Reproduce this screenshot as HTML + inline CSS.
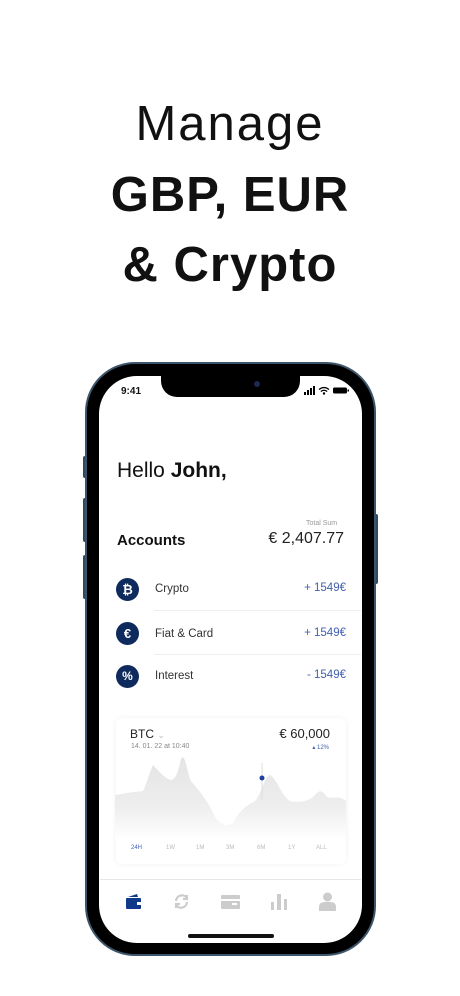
<!DOCTYPE html>
<html><head><meta charset="utf-8"><style>
*{margin:0;padding:0;box-sizing:border-box}
body{width:460px;height:996px;background:#fff;font-family:"Liberation Sans",sans-serif;position:relative;overflow:hidden;color:#111}
.h{position:absolute;left:0;width:460px;text-align:center;font-size:49px;color:#111;letter-spacing:1px}
.abs{position:absolute}
.ic{position:absolute;left:116px;width:23px;height:23px;border-radius:50%;background:#0f2a5c;color:#fff;font-size:13px;font-weight:bold;text-align:center;line-height:23px}
.lbl{position:absolute;left:155px;font-size:11.5px;color:#333}
.amt{position:absolute;right:114px;font-size:11.5px;color:#4060b0}
.tf{position:absolute;top:845px;font-size:6px;color:#bbb}
</style></head><body>
<div class="h" style="top:96px;font-weight:300;letter-spacing:2px">Manage</div>
<div class="h" style="top:167px;font-weight:bold">GBP, EUR</div>
<div class="h" style="top:237px;font-weight:bold">&amp; Crypto</div>

<div class="abs" style="left:83px;top:456px;width:4px;height:22px;background:#2d4a60;border-radius:2px"></div>
<div class="abs" style="left:83px;top:498px;width:4px;height:44px;background:#2d4a60;border-radius:2px"></div>
<div class="abs" style="left:83px;top:555px;width:4px;height:44px;background:#2d4a60;border-radius:2px"></div>
<div class="abs" style="left:374px;top:514px;width:4px;height:70px;background:#2d4a60;border-radius:2px"></div>
<div class="abs" style="left:85px;top:362px;width:291px;height:594px;border-radius:50px;background:#000;border:2px solid #3d566b"></div>
<div class="abs" style="left:99px;top:376px;width:263px;height:567px;border-radius:38px;background:#fff;overflow:hidden">
  <div class="abs" style="left:62px;top:-2px;width:139px;height:23px;background:#000;border-radius:0 0 16px 16px"></div>
  <div class="abs" style="left:155px;top:5px;width:6px;height:6px;border-radius:50%;background:#1a2a50"></div>
  <div class="abs" style="left:22px;top:10px;font-size:10px;font-weight:bold">9:41</div>
  <svg class="abs" style="left:205px;top:10px" width="46" height="9" viewBox="0 0 46 9">
    <rect x="0" y="6" width="2" height="3" fill="#000"/><rect x="3" y="4" width="2" height="5" fill="#000"/><rect x="6" y="2" width="2" height="7" fill="#000"/><rect x="9" y="0" width="2" height="9" fill="#000"/>
    <path d="M15 3.5 Q20 -0.5 25 3.5 M16.8 5.5 Q20 3 23.2 5.5" stroke="#000" stroke-width="1.3" fill="none"/><circle cx="20" cy="7.5" r="1.2" fill="#000"/>
    <rect x="29" y="1.5" width="14" height="6" rx="1.5" fill="#000"/><rect x="43.5" y="3.5" width="1.5" height="2" fill="#000"/>
  </svg>
</div>
<div class="abs" style="left:117px;top:459px;font-size:21px;color:#111">Hello <b>John,</b></div>
<div class="abs" style="left:306px;top:520px;font-size:7px;color:#999">Total Sum</div>
<div class="abs" style="left:117px;top:532px;font-size:15px;font-weight:bold">Accounts</div>
<div class="abs" style="right:116px;top:530px;font-size:16px;color:#222">€ 2,407.77</div>

<div class="ic" style="top:578px">₿</div>
<div class="lbl" style="top:583px">Crypto</div><div class="amt" style="top:582px">+ 1549€</div>
<div class="abs" style="left:154px;top:610px;width:207px;height:1px;background:#eee"></div>
<div class="ic" style="top:622px">€</div>
<div class="lbl" style="top:628px">Fiat &amp; Card</div><div class="amt" style="top:627px">+ 1549€</div>
<div class="abs" style="left:154px;top:654px;width:207px;height:1px;background:#eee"></div>
<div class="ic" style="top:665px;font-size:12px">%</div>
<div class="lbl" style="top:670px">Interest</div><div class="amt" style="top:669px">- 1549€</div>

<div class="abs" style="left:116px;top:718px;width:230px;height:146px;border-radius:6px;box-shadow:0 0 6px rgba(0,0,0,0.06)"></div>
<div class="abs" style="left:130px;top:727px;font-size:12px;color:#222">BTC <span style="color:#bbb;font-size:9px">⌄</span></div>
<div class="abs" style="left:131px;top:743px;font-size:7px;color:#888">14. 01. 22 at 10:40</div>
<div class="abs" style="right:130px;top:726px;font-size:13px;color:#222">€ 60,000</div>
<div class="abs" style="right:131px;top:744px;font-size:6px;color:#4060b0">▴ 12%</div>
<svg class="abs" style="left:115px;top:755px" width="231" height="85" viewBox="0 0 231 85">
  <defs><linearGradient id="g" x1="0" y1="0" x2="0" y2="1"><stop offset="0" stop-color="#e4e4e4"/><stop offset="0.6" stop-color="#eeeeee"/><stop offset="1" stop-color="#fff"/></linearGradient></defs>
  <path d="M0 40 C10 38 20 37 28 36 C32 28 35 16 38 10 C44 16 50 24 56 25 C62 24 64 12 66 4 C70 -4 72 18 76 26 C84 36 92 44 100 62 C106 70 112 72 118 68 C124 56 132 50 140 46 C146 40 150 20 155 20 C162 24 166 40 175 46 C185 48 195 46 200 40 C204 34 208 36 212 42 C218 44 224 40 231 46 L231 85 L0 85Z" fill="url(#g)"/>
  <line x1="147" y1="8" x2="147" y2="45" stroke="#ddd" stroke-width="1"/>
  <circle cx="147" cy="23" r="2.5" fill="#2040a0"/>
</svg>
<div class="tf" style="left:131px;color:#4060b0">24H</div>
<div class="tf" style="left:166px">1W</div>
<div class="tf" style="left:196px">1M</div>
<div class="tf" style="left:226px">3M</div>
<div class="tf" style="left:257px">6M</div>
<div class="tf" style="left:288px">1Y</div>
<div class="tf" style="left:316px">ALL</div>

<div class="abs" style="left:100px;top:879px;width:261px;height:1px;background:#e6e6e6"></div>
<svg class="abs" style="left:125px;top:893px" width="17" height="17" viewBox="0 0 17 17"><path d="M3 4 L12 1 L13 4Z" fill="#0f3a8a"/><rect x="1" y="5" width="15" height="11" rx="1" fill="#0f3a8a"/><rect x="12" y="9" width="5" height="3" fill="#fff"/></svg>
<svg class="abs" style="left:173px;top:893px" width="17" height="17" viewBox="0 0 17 17"><path d="M3 8 A6 6 0 0 1 14 5 M14 2 V6 H10 M14 9 A6 6 0 0 1 3 12 M3 15 V11 H7" stroke="#ccc" stroke-width="2.2" fill="none"/></svg>
<svg class="abs" style="left:221px;top:895px" width="19" height="14" viewBox="0 0 19 14"><rect x="0" y="0" width="19" height="14" rx="1" fill="#ccc"/><rect x="0" y="4" width="19" height="2" fill="#fff"/><rect x="11" y="8" width="5" height="2" fill="#fff"/></svg>
<svg class="abs" style="left:271px;top:894px" width="17" height="16" viewBox="0 0 17 16"><rect x="0" y="8" width="3" height="8" fill="#ccc"/><rect x="6" y="0" width="4" height="16" fill="#ccc"/><rect x="13" y="5" width="3" height="11" fill="#ccc"/></svg>
<svg class="abs" style="left:319px;top:892px" width="17" height="19" viewBox="0 0 17 19"><circle cx="8.5" cy="5" r="4.5" fill="#ccc"/><path d="M0 19 V15 Q0 10 6 10 H11 Q17 10 17 15 V19Z" fill="#ccc"/></svg>
<div class="abs" style="left:188px;top:934px;width:86px;height:4px;border-radius:2px;background:#111"></div>
</body></html>
